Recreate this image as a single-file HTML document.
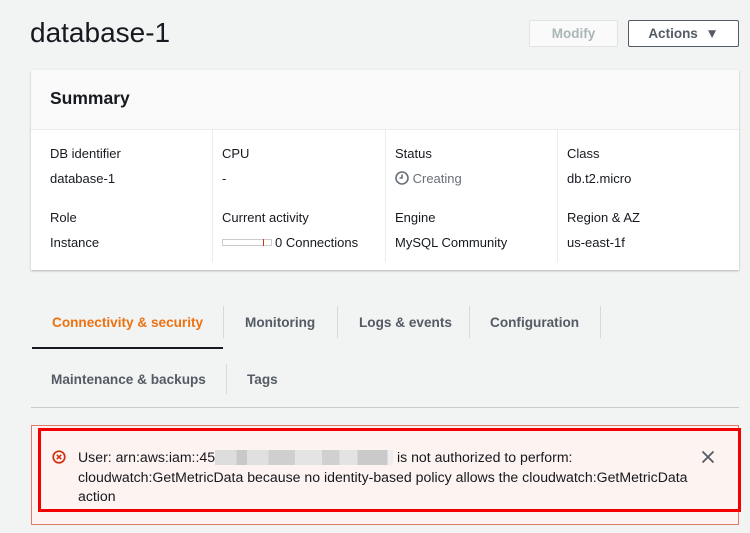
<!DOCTYPE html>
<html><head><style>
body{margin:0;width:750px;height:533px;background:#f2f3f3;font-family:"Liberation Sans",sans-serif;position:relative;overflow:hidden;color:#16191f}
.a{position:absolute;white-space:nowrap}
.btn{position:absolute;height:27px;border:1px solid;box-sizing:border-box;font-weight:bold;font-size:13.5px;line-height:25px;text-align:center;border-radius:2px}
.card{position:absolute;left:31px;top:70px;width:708px;height:200px;background:#fff;box-shadow:0 1px 2px rgba(0,0,0,.25)}
.lbl{font-size:13px;color:#16191f}
.vd{position:absolute;top:130px;width:1px;height:132px;background:#eaeded}
.tab{font-size:13.6px;font-weight:bold;color:#545b64}
.td{position:absolute;width:1px;background:#d5dbdb}
</style></head><body>
<div class="a" style="left:30px;top:17px;font-size:28px;color:#16191f">database-1</div>
<div class="btn" style="left:529px;top:20px;width:89px;border-color:#e1e4e4;background:#fafafa;color:#aab7b8">Modify</div>
<div class="btn" style="left:628px;top:20px;width:111px;border-color:#545b64;background:#fff;color:#545b64">Actions&nbsp;&nbsp;▼</div>
<div class="card">
<div style="position:absolute;left:0;top:0;width:708px;height:59px;background:#fafafa;border-bottom:1px solid #eaeded"></div>
<div class="a" style="left:19px;top:18px;font-size:17.5px;font-weight:bold">Summary</div>
</div>
<div class="vd" style="left:212px"></div><div class="vd" style="left:385px"></div><div class="vd" style="left:557px"></div>
<div class="a lbl" style="left:50px;top:146px">DB identifier</div>
<div class="a lbl" style="left:50px;top:171px">database-1</div>
<div class="a lbl" style="left:50px;top:210px">Role</div>
<div class="a lbl" style="left:50px;top:235px">Instance</div>
<div class="a lbl" style="left:222px;top:146px">CPU</div>
<div class="a lbl" style="left:222px;top:171px">-</div>
<div class="a lbl" style="left:222px;top:210px">Current activity</div>
<div class="a" style="left:222px;top:239px;width:48px;height:5px;border:1px solid #ccc;background:#fff"></div>
<div class="a" style="left:263px;top:239px;width:1px;height:7px;background:#d13212"></div>
<div class="a lbl" style="left:275px;top:235px">0 Connections</div>
<div class="a lbl" style="left:395px;top:146px">Status</div>
<div class="a lbl" style="left:395px;top:171px;color:#687078"><svg width="14" height="14" viewBox="0 0 14 14" style="vertical-align:-2px"><circle cx="7" cy="7" r="6" fill="none" stroke="#687078" stroke-width="1.6"/><path d="M7 3.5V7H4.5" fill="none" stroke="#687078" stroke-width="1.6"/></svg> Creating</div>
<div class="a lbl" style="left:395px;top:210px">Engine</div>
<div class="a lbl" style="left:395px;top:235px">MySQL Community</div>
<div class="a lbl" style="left:567px;top:146px">Class</div>
<div class="a lbl" style="left:567px;top:171px">db.t2.micro</div>
<div class="a lbl" style="left:567px;top:210px">Region &amp; AZ</div>
<div class="a lbl" style="left:567px;top:235px">us-east-1f</div>

<div class="a tab" style="left:52px;top:315px;color:#ec7211">Connectivity &amp; security</div>
<div class="a" style="left:32px;top:347px;width:191px;height:2px;background:#16191f"></div>
<div class="td" style="left:223px;top:306px;height:32px"></div>
<div class="a tab" style="left:245px;top:315px">Monitoring</div>
<div class="td" style="left:337px;top:306px;height:32px"></div>
<div class="a tab" style="left:359px;top:315px">Logs &amp; events</div>
<div class="td" style="left:469px;top:306px;height:32px"></div>
<div class="a tab" style="left:490px;top:315px">Configuration</div>
<div class="td" style="left:600px;top:306px;height:32px"></div>
<div class="a tab" style="left:51px;top:372px">Maintenance &amp; backups</div>
<div class="td" style="left:226px;top:364px;height:30px"></div>
<div class="a tab" style="left:247px;top:372px">Tags</div>
<div class="a" style="left:31px;top:407px;width:708px;height:1px;background:#c6cbcb"></div>

<div class="a" style="left:31px;top:425px;width:706px;height:98px;border:1px solid #e07a6a;background:#fdf3f1"></div>
<div class="a" style="left:38px;top:428px;width:697px;height:78px;border:3px solid #f50000;background:#fdf3f1"></div>
<svg class="a" style="left:52px;top:450px" width="14" height="14" viewBox="0 0 14 14"><circle cx="7" cy="7" r="5.8" fill="none" stroke="#d13212" stroke-width="1.7"/><path d="M4.8 4.8L9.2 9.2M9.2 4.8L4.8 9.2" stroke="#d13212" stroke-width="1.6"/></svg>
<div class="a" style="left:78px;top:448px;font-size:14.1px;line-height:19.5px;color:#16191f">User: arn:aws:iam::45<span style="display:inline-block;width:178px;height:15px;vertical-align:-3px;background:linear-gradient(90deg,#ddd 0 12%,#c9c9c9 12% 18%,#e0e0e0 18% 30%,#cfcfcf 30% 45%,#e4e4e4 45% 60%,#d0d0d0 60% 70%,#e3e3e3 70% 80%,#cacaca 80% 97%,#eee 97%)"></span> is not authorized to perform:<br>cloudwatch:GetMetricData because no identity-based policy allows the cloudwatch:GetMetricData<br>action</div>
<svg class="a" style="left:701px;top:450px" width="14" height="14" viewBox="0 0 14 14"><path d="M1.5 1.5L12.5 12.5M12.5 1.5L1.5 12.5" stroke="#545b64" stroke-width="1.8"/></svg>
</body></html>
